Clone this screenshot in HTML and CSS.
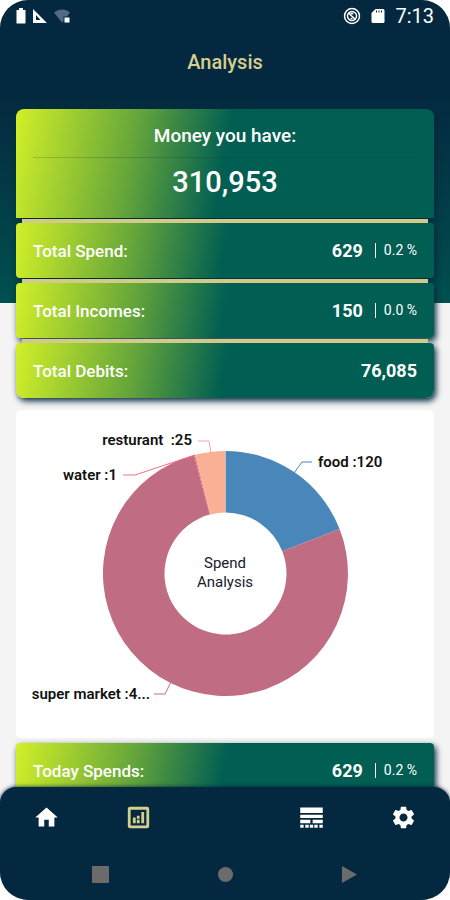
FILE: index.html
```html
<!DOCTYPE html>
<html lang="en">
<head>
    <meta charset="UTF-8">
    <meta name="viewport" content="width=device-width, initial-scale=1.0">
    <title>Analysis</title>
    <link rel="stylesheet" href="styles.css">
</head>
<body>
    <div class="screen">
        <!-- Status bar -->
        <div class="status-bar">
            <div class="status-icons">
                <svg width="10" height="16" viewBox="0 0 10 16"><path fill="#fff" d="M3 0h4v2h2.500v13.500h-9V2H3z"/></svg>
                <svg width="16" height="16" viewBox="0 0 16 16"><path fill="#fff" fill-rule="evenodd" d="M1 1l14 14H1zM4 7v5h4.500z"/></svg>
                <svg width="17" height="16" viewBox="0 0 17 16"><path fill="#526b80" d="M0 4.500C4.500.5 12 .5 16 4.500L13 8.500H9.500V13L8 14.500z"/><path fill="#fff" d="M10.500 9.500h5v5h-5z"/></svg>
            </div>
            <div class="status-icons status-right">
                <svg width="18" height="18" viewBox="0 0 18 18"><g fill="none" stroke="#fff"><circle cx="9" cy="9" r="7.500" stroke-width="1.500"/><circle cx="9" cy="9" r="4.500" stroke-width="1.500"/><path stroke-width="1.500" d="M5.500 6l7 6.500M7.500 6.500h3M7.500 11.500h2"/></g></svg>
                <svg width="14" height="16" viewBox="0 0 14 16"><path fill="#fff" d="M4.500 1H12a1.500 1.500 0 0 1 1.500 1.500v11A1.500 1.500 0 0 1 12 15H2a1.500 1.500 0 0 1-1.500-1.500V5z"/><path stroke="#04283f" d="M5.500 2.500v2M8 2.500v2M10.500 2.500v2"/></svg>
                <span class="clock">7:13</span>
            </div>
        </div>

        <h1>Analysis</h1>

        <main>
            <section class="card balance">
                <h2>Money you have:</h2>
                <p>310,953</p>
            </section>
            <div class="divider"></div>
            <section class="card row">
                <h3>Total Spend:</h3>
                <p><strong>629</strong><span class="percent">0.2 %</span></p>
            </section>
            <div class="divider"></div>
            <section class="card row">
                <h3>Total Incomes:</h3>
                <p><strong>150</strong><span class="percent">0.0 %</span></p>
            </section>
            <div class="divider"></div>
            <section class="card row last">
                <h3>Total Debits:</h3>
                <p><strong>76,085</strong></p>
            </section>

            <!-- Donut chart -->
            <section class="chart">
                <svg viewBox="0 0 418 328" role="img" aria-label="Spend Analysis">
                    <g transform="translate(209.500 163.500)">
                        <path fill="#4987ba" d="M0-122.500A122.500 122.500 0 0 1 114.100-44.500L56.800-22.200A61 61 0 0 0 0-61z"/>
                        <path fill="#c06c82" d="M114.100-44.500A122.500 122.500 0 1 1-31.500-118.400L-15.700-58.900A61 61 0 1 0 56.800-22.200z"/>
                        <path fill="#f67280" d="M-31.500-118.400L-30.300-118.700L-15.100-59.100L-15.700-58.900z"/>
                        <path fill="#f8b195" d="M-30.300-118.700A122.500 122.500 0 0 1 0-122.500V-61A61 61 0 0 0-15.100-59.100z"/>
                    </g>
                    <g class="leader">
                        <path stroke="#4987ba" d="M278 63l8-11h10"/>
                        <path stroke="#f8a5a0" d="M182 31h11l2 12"/>
                        <path stroke="#f67280" d="M107 65h12l60-20"/>
                        <path stroke="#c06c82" d="M138 284h11l6-12"/>
                    </g>
                    <g class="label">
                        <text x="302" y="57">food :120</text>
                        <text x="176" y="35" text-anchor="end" xml:space="preserve">resturant  :25</text>
                        <text x="101" y="70" text-anchor="end">water :1</text>
                        <text x="134" y="289" text-anchor="end">super market :4...</text>
                    </g>
                    <g class="center">
                        <text x="209" y="158">Spend</text>
                        <text x="209" y="177">Analysis</text>
                    </g>
                </svg>
            </section>

            <section class="card row last">
                <h3>Today Spends:</h3>
                <p><strong>629</strong><span class="percent">0.2 %</span></p>
            </section>
        </main>

        <footer>
            <nav class="tabs">
                <div class="tab-group">
                    <button aria-label="Home"><svg viewBox="0 0 24 24"><path d="M10 20v-6h4v6h5v-8h3L12 3 2 12h3v8z"/></svg></button>
                    <button class="active" aria-label="Analysis"><svg viewBox="0 0 24 24"><path fill-rule="evenodd" d="M4.500 2.500h15a2 2 0 0 1 2 2v15a2 2 0 0 1-2 2h-15a2 2 0 0 1-2-2v-15a2 2 0 0 1 2-2zM5 5v14h14V5z"/><path d="M7 12h2.500v5H7zM10.500 14H13v3h-2.500zM10.500 10.500H13V13h-2.500zM14.500 7H17v10h-2.500z"/></svg></button>
                </div>
                <div class="tab-group">
                    <button aria-label="List"><svg viewBox="0 0 24 24"><path d="M2 3h20v5H2zM2 9.500h20v3H2zM2 14h9v3H2zM13 14h9v3h-9zM2 18.500h3V21H2zM6.500 18.500h3V21h-3zM10.500 18.500h3V21h-3zM14.500 18.500h3V21h-3zM19 18.500h3V21h-3z"/></svg></button>
                    <button aria-label="Settings"><svg viewBox="0 0 24 24"><path d="M19.140 12.940c.04-.3.060-.61.060-.94 0-.32-.02-.64-.07-.94l2.030-1.580c.18-.14.230-.41.120-.61l-1.920-3.320c-.12-.22-.37-.29-.59-.22l-2.390.96c-.5-.38-1.030-.7-1.620-.94l-.36-2.540c-.04-.24-.24-.41-.48-.41h-3.840c-.24 0-.43.170-.47.410l-.36 2.540c-.59.240-1.130.570-1.620.940l-2.390-.96c-.22-.08-.47 0-.59.220L2.740 8.870c-.12.210-.08.470.120.610l2.030 1.580c-.05.3-.09.630-.09.940s.02.640.070.940l-2.030 1.580c-.18.140-.23.410-.12.610l1.920 3.320c.12.220.370.290.590.220l2.390-.96c.5.380 1.030.7 1.620.940l.36 2.540c.05.240.240.410.480.410h3.840c.24 0 .44-.17.470-.41l.36-2.540c.59-.24 1.130-.56 1.620-.94l2.390.96c.22.080.470 0 .59-.22l1.920-3.320c.12-.22.070-.47-.12-.61l-2.010-1.580zM12 15.600c-1.980 0-3.600-1.620-3.600-3.600s1.620-3.600 3.600-3.600 3.600 1.620 3.600 3.600-1.620 3.600-3.600 3.600z"/></svg></button>
                </div>
            </nav>
            <!-- Android navigation keys -->
            <div class="system-keys">
                <button aria-label="Recent apps"><svg viewBox="0 0 18 18"><rect width="18" height="18" rx="1"/></svg></button>
                <button aria-label="Home screen"><svg viewBox="0 0 18 18"><circle cx="9" cy="9" r="8"/></svg></button>
                <button aria-label="Back"><svg viewBox="0 0 18 18"><path d="M1 0l16 9-16 9z"/></svg></button>
            </div>
        </footer>
    </div>
</body>
</html>
```

FILE: styles.css
```css
* {
    margin: 0;
    padding: 0;
    box-sizing: border-box;
}

body {
    font-family: Roboto, sans-serif;
    background: #fff;
    color: #fff;
}

.screen {
    display: flex;
    flex-direction: column;
    height: 100vh;
    border-radius: 28px;
    overflow: hidden;
    background: linear-gradient(#04283f 30%, #00504f) no-repeat top / 100% 303px, #f4f4f4;
}

/* Status bar */
.status-bar {
    display: flex;
    justify-content: space-between;
    align-items: center;
    height: 32px;
    padding: 0 16px;
}

.status-icons {
    display: flex;
    align-items: center;
    gap: 6px;
}

.status-right {
    gap: 10px;
}

.clock {
    font-size: 20px;
}

h1 {
    font-size: 20px;
    font-weight: 500;
    line-height: 60px;
    margin-bottom: 17px;
    text-align: center;
    color: #d5cf8d;
}

main {
    flex: 1;
    min-height: 0;
    padding: 0 16px;
    margin-bottom: -16px;
    overflow: hidden;
}

/* Cards */
.card {
    background: linear-gradient(100deg, #d2f028, #66a63a 28%, #005e52 50%);
    border-radius: 4px;
    box-shadow: 2px 3px 6px #04283f;
}

.balance {
    height: 109px;
    padding: 0 17px;
    border-radius: 8px 8px 0 0;
    text-align: center;
}

.balance h2 {
    padding-top: 6px;
    font-size: 19px;
    font-weight: 500;
    line-height: 42px;
    border-bottom: 1px solid rgba(0, 50, 50, 0.2);
}

.balance p {
    font-size: 29px;
    font-weight: 500;
    line-height: 48px;
}

.row {
    display: flex;
    justify-content: space-between;
    align-items: center;
    height: 55px;
    padding: 0 17px;
}

.row h3 {
    font-size: 17px;
    font-weight: 500;
}

.row p {
    display: flex;
    align-items: center;
}

.row strong {
    font-size: 18px;
    font-weight: 700;
}

.percent {
    margin-left: 12px;
    padding-left: 8px;
    border-left: 1px solid #fff;
    font-size: 14px;
    line-height: 15px;
}

.last {
    border-radius: 4px 4px 8px 8px;
}

.divider {
    position: relative;
    height: 4px;
    margin: 1px 6px 0;
    background: #d1cb87;
}

/* Chart */
.chart {
    margin: 12px 0 5px;
    background: #fff;
    border-radius: 5px;
}

.chart svg {
    display: block;
    width: 100%;
}

.leader {
    fill: none;
}

.label {
    font-size: 15px;
    font-weight: 600;
    fill: #111;
}

.center {
    font-size: 15px;
    fill: #17202c;
    text-anchor: middle;
}

/* Bottom bar */
footer {
    position: relative;
    background: #04283f;
    border-radius: 16px 16px 0 0;
    box-shadow: 0 0 4px #04283f;
}

button {
    display: block;
    background: none;
    border: none;
}

button svg {
    display: block;
    width: 100%;
}

.tabs {
    display: flex;
    justify-content: space-between;
    align-items: center;
    height: 61px;
    padding: 0 33px;
}

.tab-group {
    display: flex;
    gap: 65px;
}

.tabs button {
    width: 27px;
    fill: #fff;
}

.tabs .active {
    fill: #d5cf8d;
}

.system-keys {
    display: flex;
    justify-content: space-between;
    align-items: center;
    height: 52px;
    padding: 0 92px;
}

.system-keys button {
    width: 17px;
    fill: #6b6b6b;
}
```
